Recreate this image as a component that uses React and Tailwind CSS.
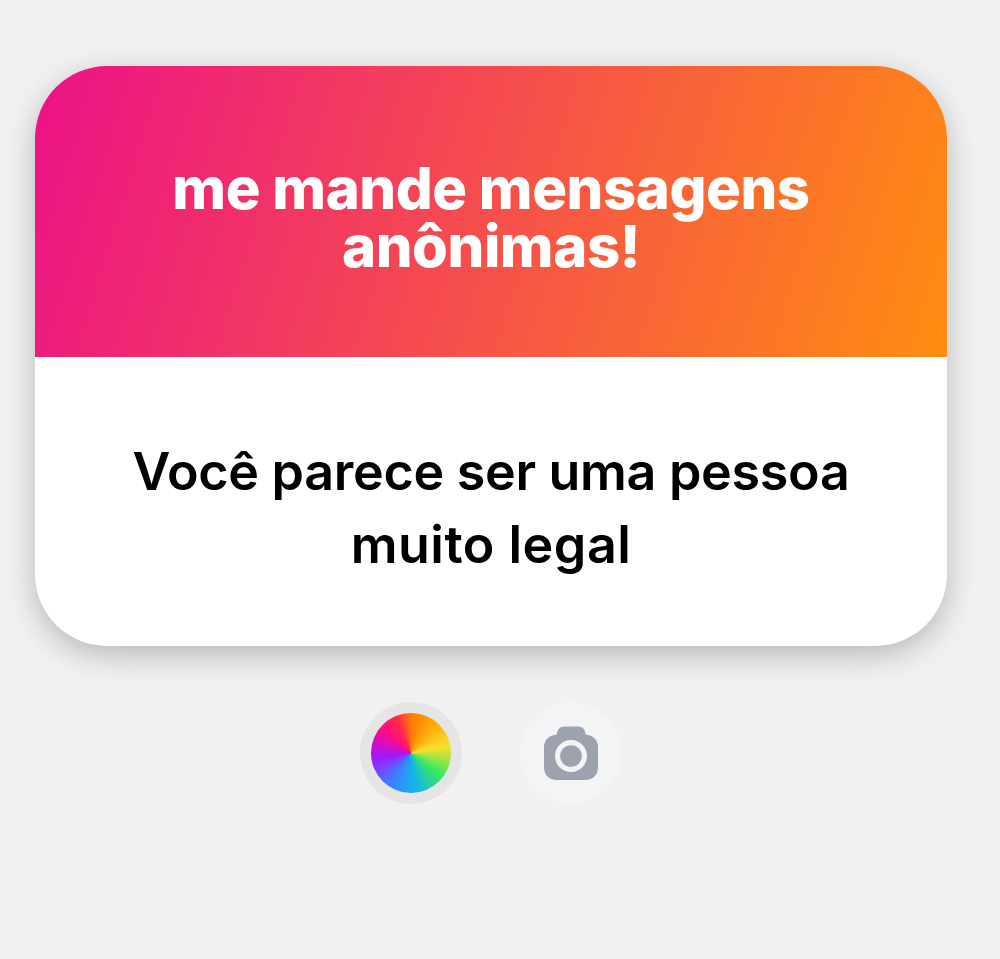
function ColorWheelButton() {
  return (
    <button
      type="button"
      aria-label="Cor"
      className="flex size-[102px] items-center justify-center rounded-full bg-[#e5e5e5]"
    >
      <span className="size-[80px] rounded-full bg-[conic-gradient(#ff7a08,#ffa60a_10%,#f8e02a_22%,#3ae860_35%,#12b5e8_48%,#3f7dff_60%,#a316fb_73%,#ff0a88_86%,#ff2a4a_94%,#ff7a08)]" />
    </button>
  );
}

function CameraButton() {
  return (
    <button
      type="button"
      aria-label="Câmera"
      className="flex size-[102px] items-center justify-center rounded-full bg-[#f3f4f6]"
    >
      <svg width="54" height="54" viewBox="0 0 54 54">
        <path
          d="M13 8.5C13 3.5 16 .5 20.5 .5H34C38.5 .5 41.5 3.5 41.5 8.5C48.5 9 54 14 54 21V41C54 49 49 54 41 54H13C5 54 0 49 0 41V21C0 14 5.5 9 13 8.5Z"
          fill="#9ca3af"
        />
        <circle cx="27" cy="30" r="13.4" fill="none" stroke="#f3f4f6" strokeWidth="5.2" />
      </svg>
    </button>
  );
}

function MessageCard() {
  return (
    <div className="h-[580px] w-[912px] overflow-hidden rounded-[72px] bg-white text-center shadow-[0_9px_30px_rgba(0,0,0,0.24)]">
      <div className="flex h-[291px] items-center justify-center bg-[linear-gradient(107deg,#ec1187,#ff8d10)] pt-[10px]">
        <h1 className="w-[720px] text-[58px] leading-[58px] font-extrabold tracking-[-0.45px] text-white">
          me mande mensagens anônimas!
        </h1>
      </div>
      <div className="flex h-[289px] items-center justify-center pt-[12px]">
        <p className="text-[52px] leading-[73px] font-semibold text-black">
          <span className="block tracking-[-0.3px]">Você parece ser uma pessoa</span>
          <span className="block tracking-[0.5px]">muito legal</span>
        </p>
      </div>
    </div>
  );
}

export default function App() {
  return (
    <main className="h-[959px] w-[1000px] overflow-hidden bg-[#f1f1f1] pt-[66px] pl-[35px] font-['Inter',sans-serif]">
      <MessageCard />
      <div className="mt-[56px] flex w-[912px] justify-center gap-[58px]">
        <ColorWheelButton />
        <CameraButton />
      </div>
    </main>
  );
}
